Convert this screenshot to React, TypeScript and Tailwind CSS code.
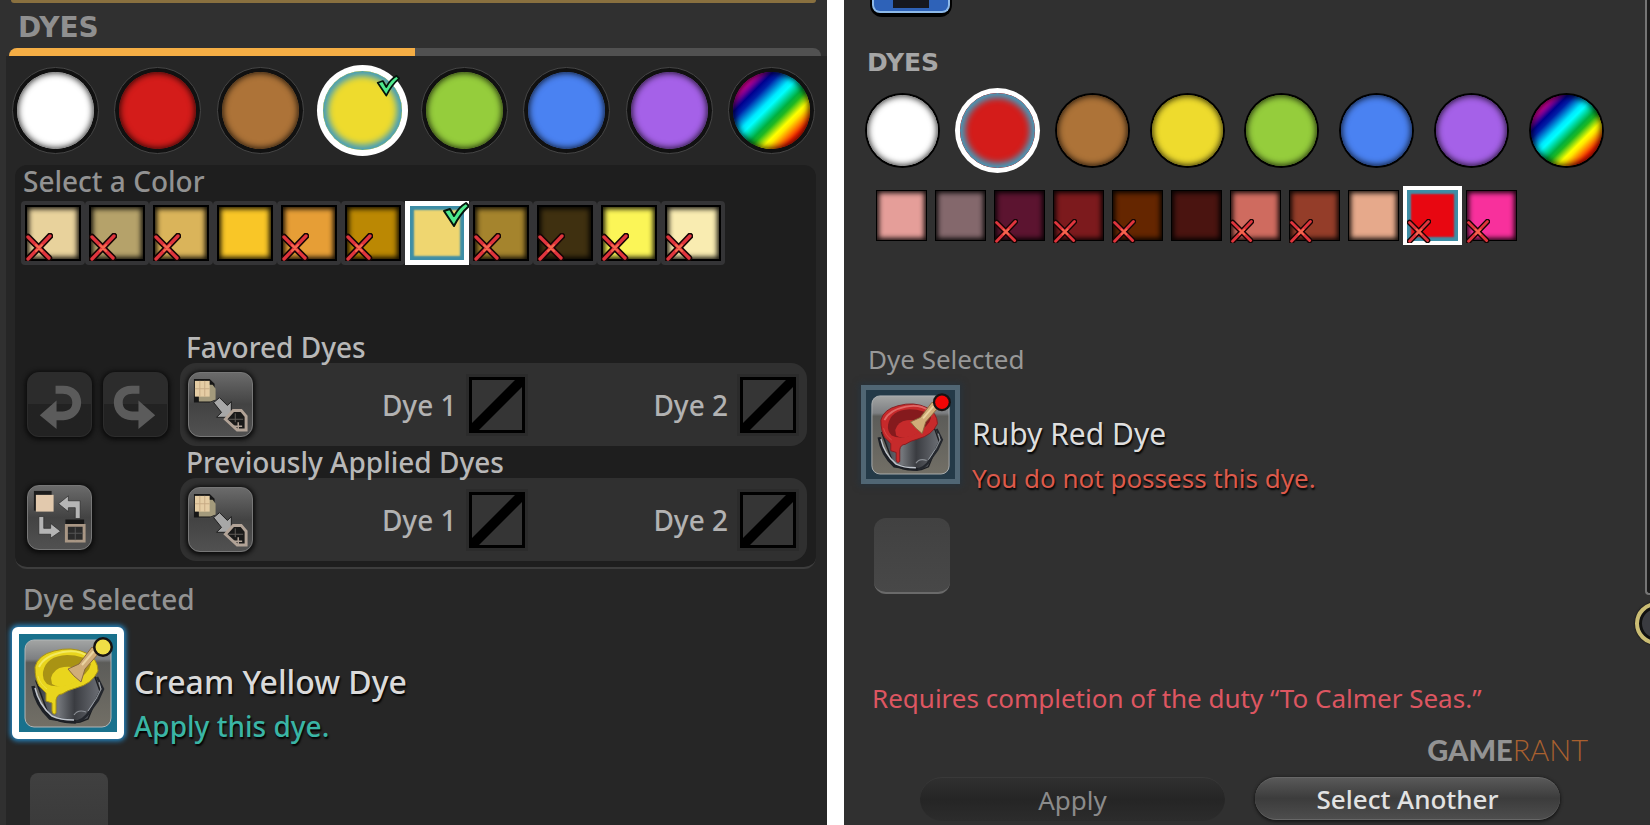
import clsx from 'clsx'

type Mark = 'x' | 'check' | null

interface Swatch {
  name: string
  color: string
  mark?: Mark
}

const RAINBOW =
  'bg-[linear-gradient(135deg,#f00098_14%,#c800a0_18%,#000090_26%,#0020a8_31%,#00e8ff_42%,#00ffff_46%,#00b040_56%,#20b820_60%,#ffff00_68%,#ffe800_71%,#ff2000_82%,#d00000_100%)]'

const HUES: Swatch[] = [
  { name: 'White', color: 'bg-white' },
  { name: 'Red', color: 'bg-[#d41c1a]' },
  { name: 'Brown', color: 'bg-[#ad7338]' },
  { name: 'Yellow', color: 'bg-[#eedb2d]' },
  { name: 'Green', color: 'bg-[#95cd3c]' },
  { name: 'Blue', color: 'bg-[#4a82f2]' },
  { name: 'Purple', color: 'bg-[#a561e8]' },
  { name: 'Special', color: RAINBOW },
]

const YELLOWS: Swatch[] = [
  { name: 'Bone White', color: 'bg-[#e8d29c]', mark: 'x' },
  { name: 'Ul Brown', color: 'bg-[#b5a26a]', mark: 'x' },
  { name: 'Desert Yellow', color: 'bg-[#dab45a]', mark: 'x' },
  { name: 'Honey Yellow', color: 'bg-[#f9c627]' },
  { name: 'Millioncorn Yellow', color: 'bg-[#e69e36]', mark: 'x' },
  { name: 'Coeurl Yellow', color: 'bg-[#bb8803]', mark: 'x' },
  { name: 'Cream Yellow', color: 'bg-[#efd670]', mark: 'check' },
  { name: 'Halatali Yellow', color: 'bg-[#a5842d]', mark: 'x' },
  { name: 'Raisin Brown', color: 'bg-[#3f3010]', mark: 'x' },
  { name: 'Canary Yellow', color: 'bg-[#fbf557]', mark: 'x' },
  { name: 'Vanilla Yellow', color: 'bg-[#f9ecb1]', mark: 'x' },
]

const REDS: Swatch[] = [
  { name: 'Rose Pink', color: 'bg-[#e59e99]' },
  { name: 'Lilac Purple', color: 'bg-[#84686c]' },
  { name: 'Rolanberry Red', color: 'bg-[#5c1430]', mark: 'x' },
  { name: 'Dalamud Red', color: 'bg-[#7c1a1d]', mark: 'x' },
  { name: 'Rust Red', color: 'bg-[#652600]', mark: 'x' },
  { name: 'Wine Red', color: 'bg-[#4a1410]' },
  { name: 'Coral Pink', color: 'bg-[#cf6b5f]', mark: 'x' },
  { name: 'Blood Red', color: 'bg-[#943d29]', mark: 'x' },
  { name: 'Salmon Pink', color: 'bg-[#e6a98b]' },
  { name: 'Ruby Red', color: 'bg-[#e80711]', mark: 'x' },
  { name: 'Cherry Pink', color: 'bg-[#f8309c]', mark: 'x' },
]

function Cross({ className }: { className?: string }) {
  return (
    <svg viewBox="0 0 28 28" className={className} fill="none" strokeLinecap="round">
      <path d="M3 4 24 25M25 3 3 26" stroke="#160504" strokeWidth="6.5" />
      <path d="M3 4 24 25M25 3 3 26" stroke="#e0353d" strokeWidth="3.3" />
      <path d="M11 12 17 18M17 12 11 18" stroke="#f5684e" strokeWidth="2" />
    </svg>
  )
}

function Check({ className }: { className?: string }) {
  return (
    <svg viewBox="0 0 28 26" className={className} strokeLinejoin="round">
      <path
        d="M2 9 8 7 12 14Q17 5 24 1L27 4Q18 12 12 24Z"
        fill="#4fe98d"
        stroke="#04150c"
        strokeWidth="2"
      />
    </svg>
  )
}

function HueButton({ hue, selected, mark, large }: { hue: Swatch; selected: boolean; mark?: boolean; large?: boolean }) {
  return (
    <button
      aria-label={hue.name}
      aria-pressed={selected}
      className={clsx(
        'relative rounded-full shrink-0',
        large ? 'size-[87px]' : 'size-[75px]',
        large && !selected && 'border border-[#454545] bg-[#111] p-1',
        large && selected && 'border-4 border-white ring-2 ring-white bg-[#429cbc]',
        !large && !selected && 'bg-black p-0.5',
        !large && selected && 'ring-[5px] ring-white bg-[#3f87a8]',
      )}
    >
      <span className={clsx('relative block size-full rounded-full overflow-hidden', hue.color)}>
        <span
          className={clsx(
            'absolute inset-0 rounded-full',
            selected
              ? 'shadow-[inset_0_0_6px_5px_#429cbc]'
              : 'shadow-[inset_0_0_6px_1px_rgba(0,0,0,0.8)]',
          )}
        />
      </span>
      {mark && <Check className="absolute right-0.5 top-1 w-6" />}
    </button>
  )
}

function SwatchButton({ swatch, selected, large }: { swatch: Swatch; selected: boolean; large?: boolean }) {
  return (
    <button
      aria-label={swatch.name}
      aria-pressed={selected}
      className={clsx(
        'relative shrink-0',
        large ? 'size-16' : 'size-[51px]',
        large && !selected && 'border-4 border-[#343436] bg-black p-0.5 rounded-sm',
        large && selected && 'border-[5px] border-white bg-[#3d8ea6]',
        !large && !selected && 'bg-black p-px',
        !large && selected && 'ring-4 ring-white bg-[#2d7ea6]',
      )}
    >
      <span className={clsx('relative block size-full', swatch.color)}>
        <span
          className={clsx(
            'absolute inset-0',
            selected
              ? 'shadow-[inset_0_0_2px_4px_#3d8ea6]'
              : 'shadow-[inset_0_0_5px_2px_rgba(0,0,0,0.9)]',
          )}
        />
      </span>
      {swatch.mark === 'x' && (
        <Cross className={clsx('absolute', large ? 'left-0 bottom-0 w-7' : 'left-0 -bottom-0.5 w-6')} />
      )}
      {swatch.mark === 'check' && <Check className="absolute -right-1.5 -top-1 w-7" />}
    </button>
  )
}

function Bucket({ paint, shade, light, dot }: { paint: string; shade: string; light: string; dot: string }) {
  const id = dot.slice(1)
  return (
    <svg viewBox="0 0 88 88" className="size-full overflow-visible">
      <defs>
        <linearGradient id={`tile-${id}`} x1="0" y1="0" x2="0" y2="1">
          <stop offset="0" stopColor="#a3a5a4" />
          <stop offset=".22" stopColor="#7d7f82" />
          <stop offset=".26" stopColor="#5c5c59" />
          <stop offset="1" stopColor="#726f66" />
        </linearGradient>
        <linearGradient id={`pail-${id}`} x1="0" y1="0" x2="1" y2="0">
          <stop offset="0" stopColor="#30343c" />
          <stop offset=".35" stopColor="#74777c" />
          <stop offset=".6" stopColor="#3a3c41" />
          <stop offset="1" stopColor="#6c6f75" />
        </linearGradient>
      </defs>
      <rect x="1" y="1" width="86" height="87" rx="9" fill={`url(#tile-${id})`} stroke="#b2b5b6" strokeWidth="1" />
      {/* pail */}
      <path d="M12 42 25 77Q38 86 56 83L64 80 73 58 76 52 71 38 60 30Z" fill={`url(#pail-${id})`} stroke="#1c1e22" strokeWidth="1.5" />
      <path d="M73 38 79 50 74 61 66 72Q60 82 50 83" fill="none" stroke="#24272d" strokeWidth="2.5" />
      <path d="M75 43 77 50 72 60 64 72" fill="none" stroke="#9da3ab" strokeWidth="1" />
      <path d="M9 47Q12 66 26 79L52 83" fill="none" stroke="#1d2026" strokeWidth="3.5" />
      <path d="M11 49Q15 66 28 77 36 81 50 81" fill="none" stroke="#bfc4cc" strokeWidth="1.5" />
      <path d="M50 76Q54 70 62 73" fill="none" stroke="#8c9096" strokeWidth="1.2" />
      {/* paint */}
      <path
        d="M11 28Q14 16 30 12 48 7 62 14 74 20 74 32 68 45 52 49 44 51 38 55 33 55 32 61L32 74Q29 77 28 72L28 64 22 62 22 54 15 47Q11 40 11 28Z"
        fill={paint}
        stroke={shade}
        strokeWidth="1"
      />
      <path d="M19 33Q22 17 43 16 60 16 67 25 65 35 48 44 32 50 23 45 18 40 19 33Z" fill={shade} />
      <path d="M27 39Q30 29 40 28 54 27 60 33 57 41 45 46 33 49 28 45Z" fill={paint} />
      <path d="M15 28Q20 17 39 13 55 10 65 18" fill="none" stroke={light} strokeWidth="2" />
      <path d="M14 37Q16 45 23 50" fill="none" stroke={light} strokeWidth="1" opacity=".6" />
      {/* brush */}
      <path d="M44 30 55 25 68 8 75 14 61 30 57 43Q49 37 44 30Z" fill="#d0ad79" stroke="#88683e" strokeWidth="1" />
      <path d="M58 26 70 12" stroke="#ead3a0" strokeWidth="2" />
      <circle cx="79" cy="8" r="10" fill="#171313" />
      <circle cx="79" cy="8" r="7.5" fill={dot} />
    </svg>
  )
}

function CopyIcon() {
  return (
    <svg viewBox="0 0 64 64" className="size-full">
      <path d="M5 6H21L26 11V28L21 30H5Z" fill="#161616" />
      <path d="M10 12H24L27 16V27L22 29H10Z" fill="#a39a7c" />
      <path d="M6 8H21V24H6Z" fill="#e5cda4" />
      <path d="M11 8V24M16 8V24M6 16H21" stroke="#c8ac85" />
      <path d="M25 30 31 25 39 33 43 29V45H28L33 40Z" fill="#a7a7a7" stroke="#1c1c1c" strokeWidth="1" />
      <path d="M37 47 45 38H53L58 44V58H49Z" fill="#191919" stroke="#b2a397" strokeWidth="3" />
      <path d="M40 47H55M47 41V50" stroke="#5f5b57" strokeWidth="1" />
      <path d="M45 54H54M50 50V57" stroke="#b2a397" strokeWidth="1.5" />
    </svg>
  )
}

function SwapIcon() {
  return (
    <svg viewBox="0 0 64 64" className="size-full">
      <path d="M6 5H24V25H6Z" fill="#1c1c1c" />
      <path d="M8 9H26V26H8Z" fill="#e2c9ad" />
      <path d="M31 18 41 10V15H53V33H48V22H41V26Z" fill="#b5b5b5" stroke="#292929" strokeWidth=".7" />
      <path d="M11 31H16V43H23V38L33 46 23 53V49H11Z" fill="#b5b5b5" stroke="#292929" strokeWidth=".7" />
      <path d="M38 34H57V39H38Z" fill="#171717" />
      <path d="M39 40H57V56H39Z" fill="#2b2b2b" stroke="#a99785" strokeWidth="3" />
      <path d="M48 42V55M41 48H56" stroke="#555" strokeWidth="1" />
    </svg>
  )
}

function TurnIcon({ flip }: { flip?: boolean }) {
  return (
    <svg viewBox="0 0 64 64" className={clsx('size-full', flip && '-scale-x-100')}>
      <path
        d="M28 13H36C47 13 54 20 54 30S46 48 36 48H29V57L12 43 29 28V39H35C41 39 45 36 45 30S41 21 35 21H28Z"
        fill="#5b5b5b"
      />
    </svg>
  )
}

function ToolButton({ label, disabled, children }: { label: string; disabled?: boolean; children: React.ReactNode }) {
  return (
    <button
      aria-label={label}
      disabled={disabled}
      className={clsx(
        'size-[65px] shrink-0 rounded-xl shadow-[0_1px_4px_2px_#0c0c0c]',
        disabled
          ? 'border border-[#2c2c2c] bg-linear-to-b from-[#2c2c2c] from-50% to-[#222] to-50%'
          : 'border border-[#777] bg-linear-to-b from-[#6b6b6b] via-[#434343] to-[#515151]',
      )}
    >
      {children}
    </button>
  )
}

function EmptySlot({ label }: { label: string }) {
  return (
    <div className="flex items-center gap-3">
      <span>{label}</span>
      <button aria-label={label} className="size-14 border-[3px] border-black bg-[#353535] shadow-[0_0_0_3px_#2b2b2b]">
        <svg viewBox="0 0 50 50" className="size-full">
          <path d="M0 50V43L43 0H50V7L7 50Z" fill="#000" />
        </svg>
      </button>
    </div>
  )
}

function DyeSlots() {
  return (
    <div className="flex items-center justify-between h-[83px] pl-2 pr-[11px] rounded-2xl bg-[#303030] text-[#b2b2b2]">
      <ToolButton label="Apply these dyes">
        <CopyIcon />
      </ToolButton>
      <EmptySlot label="Dye 1" />
      <EmptySlot label="Dye 2" />
    </div>
  )
}

function YellowPanel() {
  return (
    <section className="min-w-0 overflow-hidden bg-[#303030] text-[28px] leading-8 font-medium">
      <div className="h-[3px] mx-[11px] rounded-b bg-[#89703f]" />
      <h2 className="h-[45px] pl-[18px] font-['DejaVu_Sans'] font-bold text-[28px] leading-[50px] text-[#8f8f8f]">DYES</h2>
      <div className="ml-[9px] mr-[6px] h-2 rounded-t-lg overflow-hidden bg-[#515151]">
        <div className="h-full w-1/2 bg-[#f5ae45]" />
      </div>

      <div className="ml-1.5 h-full bg-[#262626] pl-[9px] pr-[11px]">
        <div className="flex items-center justify-between h-[109px] -ml-[3px] mr-px">
          {HUES.map((hue, i) => (
            <HueButton key={hue.name} hue={hue} selected={i === 3} mark={i === 3} large />
          ))}
        </div>

        <div className="rounded-xl border-b-2 border-[#3d3d3d] bg-[#1e1e1e] pb-1.5">
          <h3 className="pl-2 text-[#929292]">Select a Color</h3>
          <div className="flex mt-1 pl-1.5">
            {YELLOWS.map((swatch, i) => (
              <SwatchButton key={swatch.name} swatch={swatch} selected={i === 6} large />
            ))}
          </div>

          <div className="grid grid-cols-[153px_1fr] items-center mt-[66px] pl-3 pr-[9px]">
            {/* z-10 keeps the descenders above the slot row */}
            <h3 className="z-10 col-start-2 pl-1.5 text-[#b8b8b8]">Favored Dyes</h3>
            <div className="col-start-1 flex gap-[11px]">
              <ToolButton label="Undo" disabled>
                <TurnIcon />
              </ToolButton>
              <ToolButton label="Redo" disabled>
                <TurnIcon flip />
              </ToolButton>
            </div>
            <DyeSlots />
            <h3 className="z-10 col-start-2 pl-1.5 text-[#b8b8b8]">Previously Applied Dyes</h3>
            <div className="col-start-1">
              <ToolButton label="Swap dyes">
                <SwapIcon />
              </ToolButton>
            </div>
            <DyeSlots />
          </div>
        </div>

        <h3 className="mt-3.5 pl-2 text-[#929292]">Dye Selected</h3>
        <div className="flex gap-2.5 mt-3 -ml-[3px]">
          <button
            aria-label="Cream Yellow Dye"
            className="size-28 shrink-0 rounded-md border-[7px] border-white bg-[#19718d] p-[5px] shadow-[0_0_5px_2px_#2587c4]"
          >
            <Bucket paint="#e9d51d" shade="#a99314" light="#f3ea62" dot="#f0df46" />
          </button>
          <div className="mt-8 leading-[45px] [text-shadow:1px_2px_2px_#000]">
            <p className="text-[32px] text-[#dadada]">Cream Yellow Dye</p>
            <p className="text-[#3ab5a5]">Apply this dye.</p>
          </div>
        </div>
        <div className="mt-6 ml-[15px] size-[78px] rounded-lg bg-linear-to-b from-[#404040] to-[#383838]" />
      </div>
    </section>
  )
}

function RedPanel() {
  return (
    <section className="relative min-w-0 overflow-hidden bg-[#303030] pl-[22px] pr-[46px] text-[26px] leading-8">
      <div className="ml-1 w-[82px] h-[17px] rounded-b-xl border-2 border-t-0 border-black bg-black">
        <div className="flex justify-center h-[13px] rounded-b-lg border-2 border-t-0 border-[#8db9e8] bg-[#2e62b8]">
          <div className="w-9 h-2 bg-[#16181f]" />
        </div>
      </div>
      <h2 className="mt-[30px] pl-px font-['DejaVu_Sans'] font-bold text-[25px] leading-8 text-[#a6a6a6]">DYES</h2>

      <div className="flex items-center justify-between mt-[14px] -ml-px">
        {HUES.map((hue, i) => (
          <HueButton key={hue.name} hue={hue} selected={i === 1} />
        ))}
      </div>
      <div className="flex gap-2 mt-[22px] pl-2.5">
        {REDS.map((swatch, i) => (
          <SwatchButton key={swatch.name} swatch={swatch} selected={i === 9} />
        ))}
      </div>

      <h3 className="mt-[102px] pl-0.5 text-[#989898]">Dye Selected</h3>
      <div className="flex gap-3 mt-2.5 -ml-[5px]">
        <button
          aria-label="Ruby Red Dye"
          className="size-[99px] shrink-0 border-[5px] border-[#506674] bg-[#243a48] p-[5px] shadow-[0_0_6px_2px_#27333c]"
        >
          <Bucket paint="#c62a2b" shade="#851a1d" light="#df6866" dot="#f50505" />
        </button>
        <div className="mt-[27px] leading-[44px] [text-shadow:1px_2px_2px_#000]">
          <p className="text-[30px] text-[#dedede]">Ruby Red Dye</p>
          <p className="text-[#dc5a4b]">You do not possess this dye.</p>
        </div>
      </div>
      <div className="mt-[18px] ml-[8px] size-[76px] rounded-xl border-b-2 border-[#6a6a6a] bg-linear-to-b from-[#414141] to-[#484848]" />

      <p className="mt-[88px] pl-1.5 text-[#dd5661] whitespace-nowrap">Requires completion of the duty “To Calmer Seas.”</p>
      <div className="flex justify-end mt-5 pr-4 font-['Lato'] text-[29px] leading-8">
        <span className="font-black text-[#939393]">GAME</span>
        <span className="font-light text-[#a9602f]">RANT</span>
      </div>
      <div className="flex gap-[30px] mt-[11px] pl-[54px] pr-[44px]">
        <button disabled className="flex-1 h-11 rounded-full border-t border-[#393939] bg-linear-to-b from-[#303030] via-[#252525] to-[#2c2c2c] text-[#8b8b8b]">
          Apply
        </button>
        <button className="flex-1 h-[43px] rounded-full border-y border-[#676767] bg-linear-to-b from-[#595959] via-[#3c3c3c] to-[#4d4d4d] font-medium text-[#e2e2e2] shadow-[0_1px_3px_1px_#181818]">
          Select Another
        </button>
      </div>

      <div className="absolute right-0 top-0 h-[595px] w-[5px] rounded-bl border-l-2 border-b-2 border-[#757575] bg-[#1c1c1c]" />
      <div className="absolute -right-[28px] top-[602px] size-[43px] rounded-full border-4 border-[#cbbd74] bg-[#3a3b40] shadow-[inset_0_0_0_3px_#111,0_0_2px_#000]" />
    </section>
  )
}

export default function App() {
  return (
    <main className="grid grid-cols-[827fr_17px_806fr] h-screen overflow-hidden bg-white font-['Noto_Sans',sans-serif]">
      <YellowPanel />
      <div />
      <RedPanel />
    </main>
  )
}
